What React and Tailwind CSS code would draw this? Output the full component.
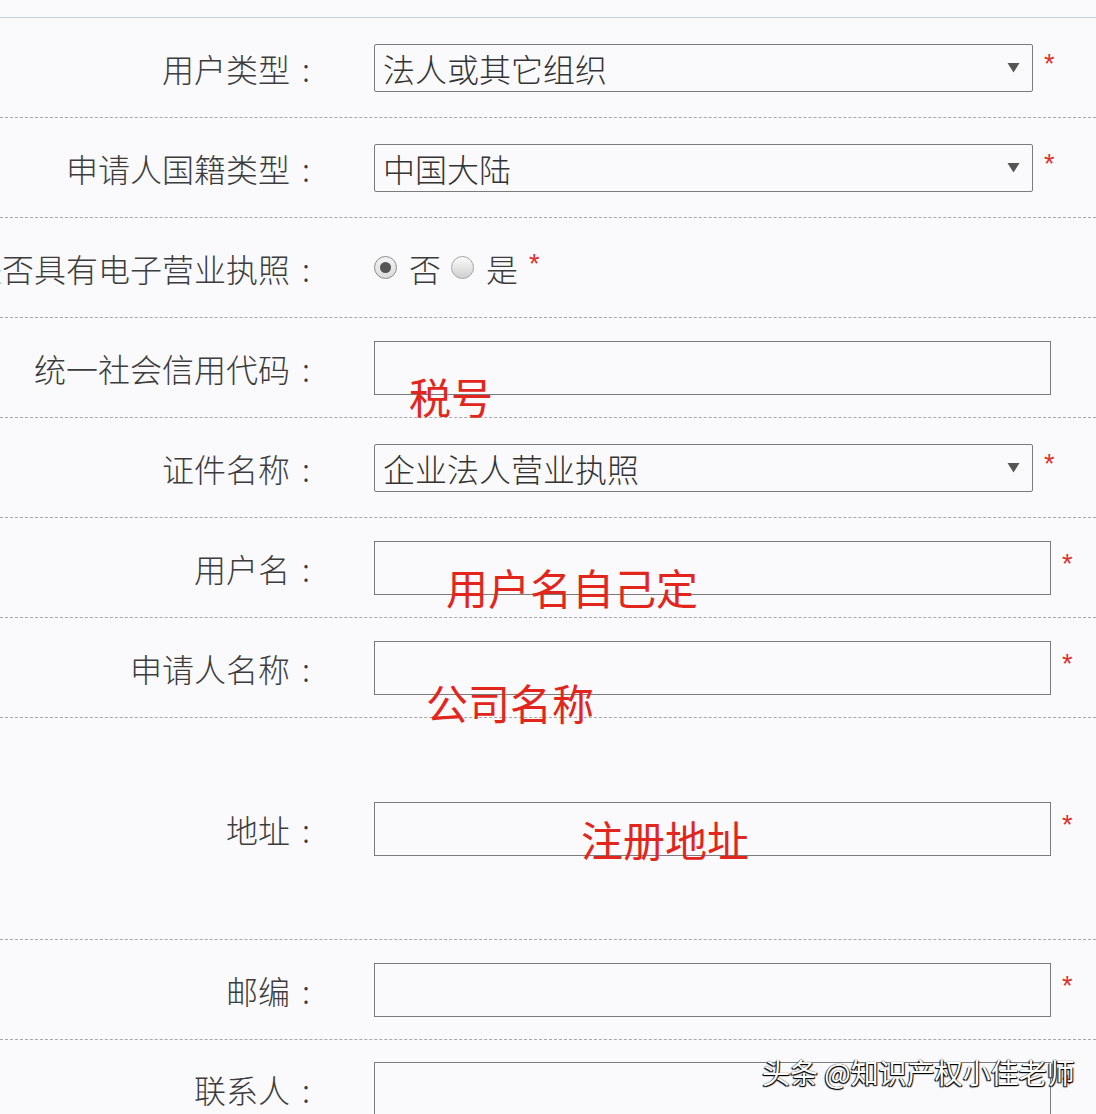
import { useState } from 'react';

const cjk = "font-['Noto_Sans_CJK_SC','Noto_Sans',sans-serif]";

function Star() {
  return (
    <span className="ml-[11px] -mt-[7px] text-[27px] leading-none text-[#e0302a] font-['Liberation_Sans',sans-serif]">
      *
    </span>
  );
}

function Label({ children }) {
  return (
    <div className="w-[322px] shrink-0 flex justify-end">
      <span className="shrink-0 whitespace-nowrap">{children}</span>
      <span className="shrink-0 w-[32px] text-center">:</span>
    </div>
  );
}

function Select({ value }) {
  return (
    <div className="flex items-center">
      <div className="w-[659px] h-[48px] border border-[#7b7b7b] rounded-[2px] flex items-center justify-between pl-[8px] pr-[12px] text-[#333]">
        <span>{value}</span>
        <svg width="13" height="11" viewBox="0 0 13 11">
          <path d="M0.5 1 L12.5 1 L6.5 10.5 Z" fill="#555" />
        </svg>
      </div>
      <Star />
    </div>
  );
}

function TextBox({ star = true }) {
  return (
    <div className="flex items-center">
      <div className="w-[677px] h-[54px] border border-[#7b7b7b]" />
      {star && <Star />}
    </div>
  );
}

function Radio({ checked, className = '' }) {
  return checked ? (
    <span className={`w-[23px] h-[23px] shrink-0 rounded-full border border-[#8a8a8a] bg-gradient-to-b from-[#f4f4f4] to-[#dcdcdc] flex items-center justify-center ${className}`}>
      <span className="w-[11px] h-[11px] rounded-full bg-[#555]" />
    </span>
  ) : (
    <span className={`w-[23px] h-[23px] shrink-0 rounded-full border border-[#a5a5a5] bg-gradient-to-b from-[#fbfbfb] to-[#cfcfcf] ${className}`} />
  );
}

function Row({ label, height = 'h-[100px]', children }) {
  return (
    <div className={`${height} flex items-center border-b border-dashed border-[#a8a8a8]`}>
      <Label>{label}</Label>
      <div className="ml-[52px] flex items-center">{children}</div>
    </div>
  );
}

export default function App() {
  const [hasLicense] = useState(false);

  return (
    <div className={`relative h-[1114px] overflow-hidden bg-[#fafafc] text-[32px] font-light text-[#3c3c3c] ${cjk}`}>
      <div className="h-[18px] border-b border-[#c3d0dd]" />

      <Row label="用户类型">
        <Select value="法人或其它组织" />
      </Row>
      <Row label="申请人国籍类型">
        <Select value="中国大陆" />
      </Row>
      <Row label="是否具有电子营业执照">
        <div className="flex items-center">
          <Radio checked={!hasLicense} />
          <span className="ml-[12px]">否</span>
          <Radio checked={hasLicense} className="ml-[10px]" />
          <span className="ml-[12px]">是</span>
          <Star />
        </div>
      </Row>
      <Row label="统一社会信用代码">
        <TextBox star={false} />
      </Row>
      <Row label="证件名称">
        <Select value="企业法人营业执照" />
      </Row>
      <Row label="用户名">
        <TextBox />
      </Row>
      <Row label="申请人名称">
        <TextBox />
      </Row>
      <Row label="地址" height="h-[222px]">
        <TextBox />
      </Row>
      <Row label="邮编">
        <TextBox />
      </Row>
      <div className="h-[100px] flex items-start pt-[22px]">
        <div className="h-[54px] flex items-center">
          <Label>联系人</Label>
        </div>
        <div className="ml-[52px] flex items-center">
          <TextBox />
        </div>
      </div>

      {/* red hand annotations */}
      <div className="absolute inset-0 pointer-events-none text-[42px] leading-none font-normal text-[#e3261d]">
        <span className="absolute left-[409px] top-[375px]">税号</span>
        <span className="absolute left-[446px] top-[566px]">用户名自己定</span>
        <span className="absolute left-[426px] top-[681px]">公司名称</span>
        <span className="absolute left-[581px] top-[818px]">注册地址</span>
      </div>

      {/* watermark */}
      <span className="absolute left-[762px] top-[1058px] text-[28px] leading-none font-normal text-white [text-shadow:-1px_1px_1px_#000,1px_1px_1px_#000,0_0_1px_#000]">
        头条 @知识产权小佳老师
      </span>
    </div>
  );
}
